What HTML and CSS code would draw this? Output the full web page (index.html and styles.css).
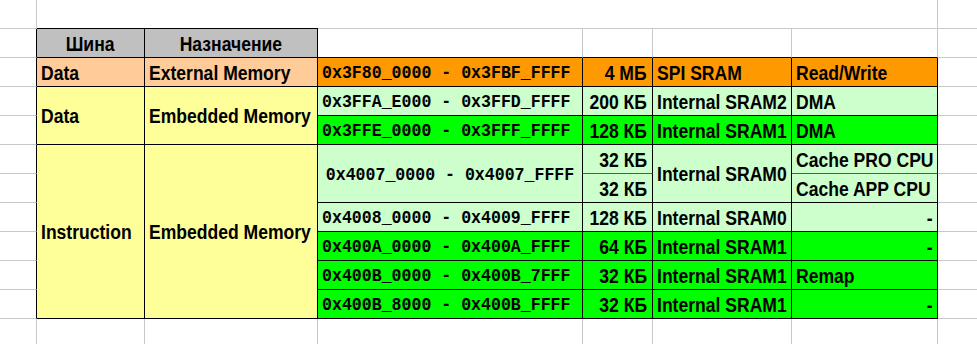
FILE: index.html
```html
<!DOCTYPE html>
<html lang="ru">
<head>
<meta charset="utf-8">
<title>Memory map</title>
<link rel="stylesheet" href="styles.css">
</head>
<body>
<div class="sheet">
  <!-- row 0 -->
  <div class="c gr gb"></div>
  <div class="c s2 kb"></div>
  <div class="c s4 gr gb"></div>
  <div class="c gb"></div>

  <!-- row 1 header -->
  <div class="c kr gb"></div>
  <div class="c hdr kr kb center"><span class="t">Шина</span></div>
  <div class="c hdr kr kb center"><span class="t">Назначение</span></div>
  <div class="c gr kb"></div>
  <div class="c gr kb"></div>
  <div class="c gr kb"></div>
  <div class="c gr kb"></div>
  <div class="c gb"></div>

  <!-- row 2 -->
  <div class="c kr gb"></div>
  <div class="c peach kr kb"><span class="t">Data</span></div>
  <div class="c peach kr kb"><span class="t">External Memory</span></div>
  <div class="c orange kr kb mono"><span class="t">0x3F80_0000 - 0x3FBF_FFFF</span></div>
  <div class="c orange kr kb num"><span class="t">4 МБ</span></div>
  <div class="c orange kr kb"><span class="t">SPI SRAM</span></div>
  <div class="c orange kr kb"><span class="t">Read/Write</span></div>
  <div class="c gb"></div>

  <!-- row 3 -->
  <div class="c kr gb"></div>
  <div class="c yellow kr kb r2"><span class="t">Data</span></div>
  <div class="c yellow kr kb r2"><span class="t">Embedded Memory</span></div>
  <div class="c lg kr kb mono"><span class="t">0x3FFA_E000 - 0x3FFD_FFFF</span></div>
  <div class="c lg kr kb num"><span class="t">200 КБ</span></div>
  <div class="c lg kr kb"><span class="t">Internal SRAM2</span></div>
  <div class="c lg kr kb"><span class="t">DMA</span></div>
  <div class="c gb"></div>

  <!-- row 4 -->
  <div class="c kr gb"></div>
  <div class="c green kr kb mono"><span class="t">0x3FFE_0000 - 0x3FFF_FFFF</span></div>
  <div class="c green kr kb num"><span class="t">128 КБ</span></div>
  <div class="c green kr kb"><span class="t">Internal SRAM1</span></div>
  <div class="c green kr kb"><span class="t">DMA</span></div>
  <div class="c gb"></div>

  <!-- row 5 -->
  <div class="c kr gb"></div>
  <div class="c yellow kr kb r6"><span class="t">Instruction</span></div>
  <div class="c yellow kr kb r6"><span class="t">Embedded Memory</span></div>
  <div class="c lg kr kb mono r2 center"><span class="t">0x4007_0000 - 0x4007_FFFF</span></div>
  <div class="c lg kr sb num"><span class="t">32 КБ</span></div>
  <div class="c lg kr kb r2"><span class="t">Internal SRAM0</span></div>
  <div class="c lg kr sb"><span class="t">Cache PRO CPU</span></div>
  <div class="c gb"></div>

  <!-- row 6 -->
  <div class="c kr gb"></div>
  <div class="c lg kr kb num"><span class="t">32 КБ</span></div>
  <div class="c lg kr kb"><span class="t">Cache APP CPU</span></div>
  <div class="c gb"></div>

  <!-- row 7 -->
  <div class="c kr gb"></div>
  <div class="c lg kr kb mono"><span class="t">0x4008_0000 - 0x4009_FFFF</span></div>
  <div class="c lg kr kb num"><span class="t">128 КБ</span></div>
  <div class="c lg kr kb"><span class="t">Internal SRAM0</span></div>
  <div class="c lg kr kb num"><span class="t">-</span></div>
  <div class="c gb"></div>

  <!-- row 8 -->
  <div class="c kr gb"></div>
  <div class="c green kr kb mono"><span class="t">0x400A_0000 - 0x400A_FFFF</span></div>
  <div class="c green kr kb num"><span class="t">64 КБ</span></div>
  <div class="c green kr kb"><span class="t">Internal SRAM1</span></div>
  <div class="c green kr kb num"><span class="t">-</span></div>
  <div class="c gb"></div>

  <!-- row 9 -->
  <div class="c kr gb"></div>
  <div class="c green kr kb mono"><span class="t">0x400B_0000 - 0x400B_7FFF</span></div>
  <div class="c green kr kb num"><span class="t">32 КБ</span></div>
  <div class="c green kr kb"><span class="t">Internal SRAM1</span></div>
  <div class="c green kr kb"><span class="t">Remap</span></div>
  <div class="c gb"></div>

  <!-- row 10 -->
  <div class="c kr gb"></div>
  <div class="c green kr kb mono"><span class="t">0x400B_8000 - 0x400B_FFFF</span></div>
  <div class="c green kr kb num"><span class="t">32 КБ</span></div>
  <div class="c green kr kb"><span class="t">Internal SRAM1</span></div>
  <div class="c green kr kb num"><span class="t">-</span></div>
  <div class="c gb"></div>

  <!-- row 11 -->
  <div class="c gr"></div>
  <div class="c gr"></div>
  <div class="c gr"></div>
  <div class="c gr"></div>
  <div class="c gr"></div>
  <div class="c gr"></div>
  <div class="c gr"></div>
  <div class="c"></div>
</div>
</body>
</html>
```

FILE: styles.css
```css
html, body {
  margin: 0;
  padding: 0;
  background: #ffffff;
}

.sheet {
  display: grid;
  grid-template-columns: 37px 108px 173px 265px 70px 139px 146px 1fr;
  grid-template-rows: repeat(11, 29px) 1fr;
  width: 977px;
  height: 344px;
  overflow: hidden;
}

.c {
  box-sizing: border-box;
  display: flex;
  align-items: center;
  padding: 2px 4px 0 4px;
  font-family: "Liberation Sans", Arial, sans-serif;
  font-weight: bold;
  font-size: 19.5px;
  color: #000000;
  white-space: nowrap;
  overflow: hidden;
  min-width: 0;
}

.t {
  display: inline-block;
  transform: scaleX(0.9);
  transform-origin: left center;
}

.s2 { grid-column: span 2; }
.s4 { grid-column: span 4; }
.r2 { grid-row: span 2; }
.r6 { grid-row: span 6; }

.gr { border-right: 1px solid #c8c8c8; }
.gb { border-bottom: 1px solid #c8c8c8; }
.kr { border-right: 1px solid #000000; }
.kb { border-bottom: 1px solid #000000; }
.sb { border-bottom: 1px solid #5a5a5a; }

.center { justify-content: center; }
.center .t { transform-origin: center center; }
.num { justify-content: flex-end; padding-right: 5px; }
.num .t { transform-origin: right center; }

.mono {
  font-family: "Liberation Mono", "Courier New", monospace;
  font-size: 18px;
}
.mono .t { transform: scaleX(0.92); }

.hdr { background: #c0c0c0; }
.peach { background: #ffcc99; }
.orange { background: #ff9900; }
.yellow { background: #ffff99; }
.lg { background: #ccffcc; }
.green { background: #00ff00; }
```
